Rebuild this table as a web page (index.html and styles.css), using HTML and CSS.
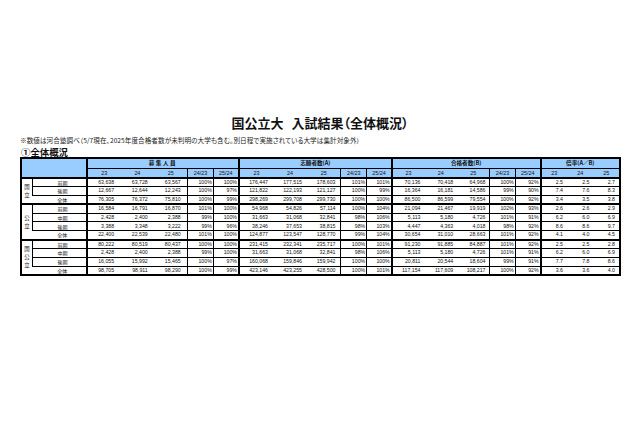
FILE: index.html
```html
<!DOCTYPE html>
<html lang="ja">
<head>
<meta charset="utf-8">
<title>国公立大 入試結果（全体概況）</title>
<link rel="stylesheet" href="styles.css">
</head>
<body>
<div class="page">
  <h1 class="title">国公立大<span class="gap"></span>入試結果（全体概況）</h1>
  <p class="note">※数値は河合塾調べ（5/7現在、2025年度合格者数が未判明の大学も含む。別日程で実施されている大学は集計対象外）</p>
  <h2 class="heading">①全体概況</h2>
  <table class="res">
    <colgroup>
      <col style="width:11.3px"><col style="width:54.7px">
      <col style="width:33.6px"><col style="width:33.6px"><col style="width:33.5px"><col style="width:25.6px"><col style="width:25.7px">
      <col style="width:34px"><col style="width:34px"><col style="width:34px"><col style="width:25.7px"><col style="width:25px">
      <col style="width:32.8px"><col style="width:32.8px"><col style="width:32.7px"><col style="width:25.3px"><col style="width:25.4px">
      <col style="width:26.4px"><col style="width:26.4px"><col style="width:26.5px">
    </colgroup>
    <thead>
      <tr class="h1">
        <th class="corner" colspan="2" rowspan="2"></th>
        <th class="grp s" colspan="5"><span class="ls">募集人員</span></th>
        <th class="grp s" colspan="5">志願者数(A)</th>
        <th class="grp s" colspan="5">合格者数(B)</th>
        <th class="grp s" colspan="3">倍率(A／B)</th>
      </tr>
      <tr class="h2">
        <th class="sub s">23</th><th class="sub">24</th><th class="sub">25</th><th class="sub v">24/23</th><th class="sub v">25/24</th>
        <th class="sub s">23</th><th class="sub">24</th><th class="sub">25</th><th class="sub v">24/23</th><th class="sub v">25/24</th>
        <th class="sub s">23</th><th class="sub">24</th><th class="sub">25</th><th class="sub v">24/23</th><th class="sub v">25/24</th>
        <th class="sub s">23</th><th class="sub">24</th><th class="sub">25</th>
      </tr>
    </thead>
    <tbody>
      <tr class="first">
        <td class="g" rowspan="3">国<br>立</td><td class="l bl">前期</td>
        <td class="n m s">63,638</td><td class="n m">63,728</td><td class="n m">63,567</td><td class="p v">100%</td><td class="p v">100%</td>
        <td class="n a s">176,447</td><td class="n a">177,515</td><td class="n a">178,603</td><td class="p v">101%</td><td class="p v">101%</td>
        <td class="n b s">70,136</td><td class="n b">70,418</td><td class="n b">64,968</td><td class="p v">100%</td><td class="p v">92%</td>
        <td class="n x s">2.5</td><td class="n x">2.5</td><td class="n x">2.7</td>
      </tr>
      <tr>
        <td class="l bl">後期</td>
        <td class="n m s">12,667</td><td class="n m">12,644</td><td class="n m">12,243</td><td class="p v">100%</td><td class="p v">97%</td>
        <td class="n a s">121,822</td><td class="n a">122,193</td><td class="n a">121,127</td><td class="p v">100%</td><td class="p v">99%</td>
        <td class="n b s">16,364</td><td class="n b">16,181</td><td class="n b">14,586</td><td class="p v">99%</td><td class="p v">90%</td>
        <td class="n x s">7.4</td><td class="n x">7.6</td><td class="n x">8.3</td>
      </tr>
      <tr class="sep">
        <td class="l">全体</td>
        <td class="n m s">76,305</td><td class="n m">76,372</td><td class="n m">75,810</td><td class="p v">100%</td><td class="p v">99%</td>
        <td class="n a s">298,269</td><td class="n a">299,708</td><td class="n a">299,730</td><td class="p v">100%</td><td class="p v">100%</td>
        <td class="n b s">86,500</td><td class="n b">86,599</td><td class="n b">79,554</td><td class="p v">100%</td><td class="p v">92%</td>
        <td class="n x s">3.4</td><td class="n x">3.5</td><td class="n x">3.8</td>
      </tr>
      <tr>
        <td class="g" rowspan="4">公<br>立</td><td class="l bl">前期</td>
        <td class="n m s">16,584</td><td class="n m">16,791</td><td class="n m">16,870</td><td class="p v">101%</td><td class="p v">100%</td>
        <td class="n a s">54,968</td><td class="n a">54,826</td><td class="n a">57,114</td><td class="p v">100%</td><td class="p v">104%</td>
        <td class="n b s">21,094</td><td class="n b">21,467</td><td class="n b">19,919</td><td class="p v">102%</td><td class="p v">93%</td>
        <td class="n x s">2.6</td><td class="n x">2.6</td><td class="n x">2.9</td>
      </tr>
      <tr>
        <td class="l bl">中期</td>
        <td class="n m s">2,428</td><td class="n m">2,400</td><td class="n m">2,388</td><td class="p v">99%</td><td class="p v">100%</td>
        <td class="n a s">31,663</td><td class="n a">31,068</td><td class="n a">32,841</td><td class="p v">98%</td><td class="p v">106%</td>
        <td class="n b s">5,113</td><td class="n b">5,180</td><td class="n b">4,726</td><td class="p v">101%</td><td class="p v">91%</td>
        <td class="n x s">6.2</td><td class="n x">6.0</td><td class="n x">6.9</td>
      </tr>
      <tr>
        <td class="l bl">後期</td>
        <td class="n m s">3,388</td><td class="n m">3,348</td><td class="n m">3,222</td><td class="p v">99%</td><td class="p v">96%</td>
        <td class="n a s">38,246</td><td class="n a">37,653</td><td class="n a">38,815</td><td class="p v">98%</td><td class="p v">103%</td>
        <td class="n b s">4,447</td><td class="n b">4,363</td><td class="n b">4,018</td><td class="p v">98%</td><td class="p v">92%</td>
        <td class="n x s">8.6</td><td class="n x">8.6</td><td class="n x">9.7</td>
      </tr>
      <tr class="sep">
        <td class="l">全体</td>
        <td class="n m s">22,400</td><td class="n m">22,539</td><td class="n m">22,480</td><td class="p v">101%</td><td class="p v">100%</td>
        <td class="n a s">124,877</td><td class="n a">123,547</td><td class="n a">128,770</td><td class="p v">99%</td><td class="p v">104%</td>
        <td class="n b s">30,654</td><td class="n b">31,010</td><td class="n b">28,663</td><td class="p v">101%</td><td class="p v">92%</td>
        <td class="n x s">4.1</td><td class="n x">4.0</td><td class="n x">4.5</td>
      </tr>
      <tr>
        <td class="g" rowspan="4">国<br>公<br>立</td><td class="l bl">前期</td>
        <td class="n m s">80,222</td><td class="n m">80,519</td><td class="n m">80,437</td><td class="p v">100%</td><td class="p v">100%</td>
        <td class="n a s">231,415</td><td class="n a">232,341</td><td class="n a">235,717</td><td class="p v">100%</td><td class="p v">101%</td>
        <td class="n b s">91,230</td><td class="n b">91,885</td><td class="n b">84,887</td><td class="p v">101%</td><td class="p v">92%</td>
        <td class="n x s">2.5</td><td class="n x">2.5</td><td class="n x">2.8</td>
      </tr>
      <tr>
        <td class="l bl">中期</td>
        <td class="n m s">2,428</td><td class="n m">2,400</td><td class="n m">2,388</td><td class="p v">99%</td><td class="p v">100%</td>
        <td class="n a s">31,663</td><td class="n a">31,068</td><td class="n a">32,841</td><td class="p v">98%</td><td class="p v">106%</td>
        <td class="n b s">5,113</td><td class="n b">5,180</td><td class="n b">4,726</td><td class="p v">101%</td><td class="p v">91%</td>
        <td class="n x s">6.2</td><td class="n x">6.0</td><td class="n x">6.9</td>
      </tr>
      <tr>
        <td class="l bl">後期</td>
        <td class="n m s">16,055</td><td class="n m">15,992</td><td class="n m">15,465</td><td class="p v">100%</td><td class="p v">97%</td>
        <td class="n a s">160,068</td><td class="n a">159,846</td><td class="n a">159,942</td><td class="p v">100%</td><td class="p v">100%</td>
        <td class="n b s">20,811</td><td class="n b">20,544</td><td class="n b">18,604</td><td class="p v">99%</td><td class="p v">91%</td>
        <td class="n x s">7.7</td><td class="n x">7.8</td><td class="n x">8.6</td>
      </tr>
      <tr class="last">
        <td class="l">全体</td>
        <td class="n m s">98,705</td><td class="n m">98,911</td><td class="n m">98,290</td><td class="p v">100%</td><td class="p v">99%</td>
        <td class="n a s">423,146</td><td class="n a">423,255</td><td class="n a">428,500</td><td class="p v">100%</td><td class="p v">101%</td>
        <td class="n b s">117,154</td><td class="n b">117,609</td><td class="n b">108,217</td><td class="p v">100%</td><td class="p v">92%</td>
        <td class="n x s">3.6</td><td class="n x">3.6</td><td class="n x">4.0</td>
      </tr>
    </tbody>
  </table>
</div>
</body>
</html>
```
FILE: styles.css
```css
* { box-sizing: border-box; }
html, body { margin: 0; padding: 0; background: #fff; }
body {
  font-family: "Liberation Sans", Arial, "Noto Sans CJK JP", sans-serif;
  color: #000;
  width: 640px;
  height: 426px;
  overflow: hidden;
}
.page {
  padding-top: 115px;
}
.title {
  margin: 0;
  font-family: "Noto Sans CJK JP", sans-serif;
  font-weight: 700;
  font-size: 13px;
  line-height: 16px;
  text-align: center;
  font-feature-settings: "palt";
  color: #111;
}
.gap { display: inline-block; width: 8px; }
.note {
  margin: 5px 0 0 20px;
  font-family: "Noto Sans CJK JP", sans-serif;
  font-size: 6.6px;
  line-height: 8px;
  white-space: nowrap;
  font-feature-settings: "palt";
  letter-spacing: 0.05px;
  color: #222;
}
.heading {
  margin: 3px 0 0 21px;
  font-family: "Noto Sans CJK JP", sans-serif;
  font-weight: 700;
  font-size: 9.4px;
  line-height: 10px;
  color: #111;
}
.res {
  margin-left: 20px;
  width: 599px;
  table-layout: fixed;
  border-collapse: collapse;
  border: 2px solid #000;
  font-size: 5.2px;
}
.res th, .res td {
  padding: 0;
  border-top: 1px solid #000;
  border-bottom: 1px solid #000;
  border-left: none;
  border-right: none;
  white-space: nowrap;
  overflow: hidden;
}
.res thead th {
  background: #99ccff;
  font-weight: 400;
  text-align: center;
  color: #111;
}
.h1 th { height: 10px; line-height: 8px; font-family: "Noto Sans CJK JP", sans-serif; font-size: 5.6px; font-weight: 700 !important; }
.h2 th { height: 9.7px; line-height: 8px; font-size: 5.4px; }
.h2 th.sub { border-bottom: 2px solid #000; }
.corner { border-bottom: 2px solid #000 !important; }
.ls { letter-spacing: 1.5px; }
.res .s { border-left: 2px solid #000; }
.res .v { border-left: 1px solid #000; }
.res td { height: 8.85px; line-height: 7px; color: #111; }
.g {
  font-family: "Noto Sans CJK JP", sans-serif;
  font-size: 5.4px;
  line-height: 8px !important;
  text-align: center;
  vertical-align: middle;
  border-bottom: 2px solid #000 !important;
}
.l {
  font-family: "Noto Sans CJK JP", sans-serif;
  font-size: 5px;
  text-align: center;
  padding-left: 6px !important;
}
.res .bl { border-left: 1px solid #000; }
.n, .p { text-align: right; }
.m { padding-right: 6.5px !important; }
.a { padding-right: 5px !important; }
.b { padding-right: 4px !important; }
.x { padding-right: 4px !important; }
.p { padding-right: 1px !important; }
.sep td { border-bottom: 2px solid #000; }
.last td { border-bottom: 2px solid #000; }
```
